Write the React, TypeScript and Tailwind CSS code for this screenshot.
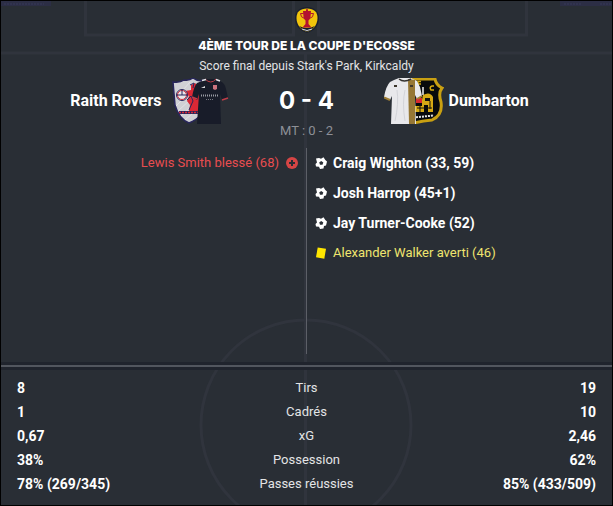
import React from 'react';
import clsx from 'clsx';

type EventKind = 'goal' | 'injury' | 'booking';

interface MatchEvent {
  kind: EventKind;
  text: string;
}

const homeEvents: MatchEvent[] = [
  { kind: 'injury', text: 'Lewis Smith blessé (68)' },
];

const awayEvents: MatchEvent[] = [
  { kind: 'goal', text: 'Craig Wighton (33, 59)' },
  { kind: 'goal', text: 'Josh Harrop (45+1)' },
  { kind: 'goal', text: 'Jay Turner-Cooke (52)' },
  { kind: 'booking', text: 'Alexander Walker averti (46)' },
];

const stats = [
  { label: 'Tirs', home: '8', away: '19' },
  { label: 'Cadrés', home: '1', away: '10' },
  { label: 'xG', home: '0,67', away: '2,46' },
  { label: 'Possession', home: '38%', away: '62%' },
  { label: 'Passes réussies', home: '78% (269/345)', away: '85% (433/509)' },
];

// Faint pitch markings behind the whole panel
const PitchBackground: React.FC = () => (
  <svg
    className="absolute inset-0 h-full w-full"
    viewBox="0 0 611 504"
    preserveAspectRatio="xMidYMin slice"
    aria-hidden="true"
  >
    <path d="M0 0h50v5H0zM559 0h52v5h-52z" fill="#2c2e45" />
    <path d="M3 3h40M563 3h17M599 3h12" stroke="#36385a" strokeWidth="1" strokeDasharray="2 1" />
    <g fill="none" stroke="#30343d" strokeWidth="3">
      <path d="M84.500 0v34h208V0M317.500 0v34h208V0" />
      <path d="M0 52h611" />
      <path d="M304.500 52v452" />
      <circle cx="305" cy="424" r="105" />
    </g>
  </svg>
);

const CupBadge: React.FC = () => (
  <svg width="26" height="28" viewBox="0 0 26 28" aria-hidden="true">
    <path d="M13 1C20 1 25 5 25 12C25 20 20 25 13 27C6 25 1 20 1 12C1 5 6 1 13 1Z" fill="#1b2030" />
    <path d="M13 2.500C20 2.500 23.500 6 23.500 12C23.500 19 19 24 13 26C7 24 2.500 19 2.500 12C2.500 6 6 2.500 13 2.500Z" fill="#f1c40c" />
    <path d="M5 20Q13 24 21 20Q18 24 13 26Q8 24 5 20Z" fill="#151b2b" />
    <path d="M8 23Q13 26 18 23" stroke="#d6d9df" fill="none" />
    <path d="M9 5h8l-.5 6q-.5 3-2 3.500v3.500l3 3.500H8.500l3-3.500v-3.500q-1.500-.5-2-3.500Z" fill="#b3122f" />
    <path d="M9.500 7.500H6.500q0 4 4 5M16.500 7.500H19.500q0 4-4 5M12.500 3.500h1v2h-1z" stroke="#b3122f" fill="none" />
  </svg>
);

const HomeKit: React.FC = () => (
  <svg width="58" height="46" viewBox="0 0 58 46" aria-hidden="true">
    <path d="M1 4Q8 5 12 2Q17 3 21 0Q26 4 32 2L34 24Q32 39 17 45Q7 41 3 27Z" fill="#d0d1d5" stroke="#28265c" strokeWidth="1.500" />
    <path d="M4 20L18 4M4 28L14 18M6 33L20 20M9 38L24 24M13 42L28 29" stroke="#e2e2e5" strokeWidth="1" />
    <path d="M19 7L23 5L27 9V33H17L18 27L15 23L17 18L13 16V13L19 12Z" fill="#db2835" />
    <path d="M18 7L22 5L21 10M15 22L19 18L21 23L17 32" stroke="#28265c" fill="none" />
    <circle cx="10" cy="17" r="5.500" fill="#e8e8eb" stroke="#28265c" />
    <circle cx="10" cy="17" r="4.500" fill="none" stroke="#d72a37" />
    <path d="M5 17h10M10 12v5" stroke="#28265c" />
    <path d="M7 34.500h20" stroke="#28265c" strokeWidth="3" />
    <path d="M7 34.500h20" stroke="#d72a37" strokeWidth="1.500" strokeDasharray="2 1" />
    <path d="M30 3L34 1H44L48 3Q53 5 54 11L56 20L50 22L48 16L49 46H25L27 16L25 22L20 19Q22 8 25 5Z" fill="#181c29" />
    <path d="M33 1Q39 7 44 1" stroke="#bd3d48" fill="none" />
    <path d="M30 2.500l4-1M44 1.500l4 1.500" stroke="#e4e4e7" strokeWidth="1.500" />
    <path d="M20 19l5 2M50 22l6-2" stroke="#bd3d48" strokeWidth="1.500" />
    <path d="M29 10l4-2v2z" fill="#d7d8dc" />
    <path d="M41 7h4v4l-2 1-2-1z" fill="#cc7580" />
    <path d="M29 17.500h17" stroke="#9a9ca5" strokeWidth="2" strokeDasharray="1 1" />
    <path d="M34 21.500h8" stroke="#777a84" strokeDasharray="1 1" />
  </svg>
);

const AwayKit: React.FC = () => (
  <svg width="60" height="46" viewBox="0 0 60 46" aria-hidden="true">
    <path d="M24 1L51 0Q52 6 59 10Q55 15 58 24Q60 38 48 43Q38 43 30 46L21 39Z" fill="#080a0c" />
    <path d="M24 1L51 1Q52 7 58 10Q54 15 57 24Q59 37 48 42Q38 43 30 45" stroke="#c9a012" strokeWidth="3" fill="none" />
    <path d="M34 8V3.500h3M34 6h3M50 8h-2q-3 1-1 4h3" fill="none" stroke="#d4aa12" strokeWidth="1.500" />
    <path d="M35 10v6M39 9v8" stroke="#f1f1f1" strokeWidth="1.500" />
    <path d="M30 34V28H38V22L39 17Q46 13 49 19V34H44V27H40V34Z" fill="#d6a914" />
    <path d="M41 20h5v3h-5z" fill="#131414" />
    <path d="M32 20h6v5h-6z" fill="#d92a2e" />
    <path d="M33 30h15M36 27v7M46 23v8" stroke="#15120a" />
    <path d="M29 39.500L50 37.500" stroke="#e6e6e6" strokeWidth="2" strokeDasharray="2 1" />
    <path d="M10 2L15 0H27L33 3L36 9L38 18L33 21L31 17L32 46H7L8 18L6 22L0 19Q2 8 6 4Z" fill="#e8e8eb" />
    <path d="M24 1L31 2L31 46H25Z" fill="#967735" />
    <path d="M15 1Q20 5 27 1" stroke="#34322f" fill="none" strokeWidth="1.500" />
    <path d="M0 19.500l6 2.500M33 21l5-3" stroke="#a18036" strokeWidth="2" />
    <path d="M10 8h3M26 8h3" stroke="#3b352b" strokeWidth="2" />
    <path d="M13 12Q15 25 11 43M21 12Q18 25 21 43" stroke="#d3d4d9" fill="none" />
  </svg>
);

const EventIcon: React.FC<{ kind: EventKind }> = ({ kind }) => {
  if (kind === 'injury') {
    return (
      <svg width="12" height="12" viewBox="0 0 12 12" aria-hidden="true">
        <circle cx="6" cy="6" r="6" fill="#d64545" />
        <path d="M6 3v6M3 6h6" stroke="#292e35" strokeWidth="2" />
      </svg>
    );
  }
  if (kind === 'booking') {
    return (
      <svg width="12" height="12" viewBox="0 0 12 12" aria-hidden="true">
        <path d="M2.700 .5L11 1.800L9.300 11.700L1 10.300Z" fill="#ffe600" />
      </svg>
    );
  }
  return (
    <svg width="12" height="12" viewBox="0 0 12 12" aria-hidden="true">
      <path d="M1 1.500L4 1L6 1.800L8.500 .3L10.300 3L12 4.500L11 8.500L9 9L8.500 11.500L5 11.900L4 9.800L1 9.500L.5 7L2 5.500Z" fill="#fff" />
      <path d="M6.200 3.900L8.300 5.400L7.500 7.800H5L4.200 5.400Z" fill="#292e35" />
    </svg>
  );
};

const EventList: React.FC<{ events: MatchEvent[]; side: 'home' | 'away' }> = ({ events, side }) => (
  <ul className={clsx('flex-1', side === 'home' ? 'pr-2' : 'pl-2')}>
    {events.map((event) => (
      <li
        key={event.text}
        className={clsx(
          'flex h-[30px] items-center whitespace-nowrap',
          side === 'home' ? 'flex-row-reverse gap-[7px]' : 'gap-[6px]',
          event.kind === 'goal' && 'text-[14px] font-bold text-white',
          event.kind === 'injury' && 'text-[13px] text-[#e84d50]',
          event.kind === 'booking' && 'text-[13px] text-[#efe56f]'
        )}
      >
        <EventIcon kind={event.kind} />
        <span>{event.text}</span>
      </li>
    ))}
  </ul>
);

const App: React.FC = () => {
  return (
    <main className="relative border border-black bg-[#292e35] font-['Roboto','Liberation_Sans',sans-serif] text-white">
      <PitchBackground />

      <div className="relative">
        <header className="flex flex-col items-center pt-[5px]">
          <CupBadge />
          <h1 className="mt-1 font-['Inter','Liberation_Sans',sans-serif] text-[12px] font-extrabold leading-4">
            4ÈME TOUR DE LA COUPE D'ECOSSE
          </h1>
          <p className="mt-[2px] text-[12px] leading-5 text-[#e3e4e6]">Score final depuis Stark's Park, Kirkcaldy</p>
        </header>

        <section className="mt-[2px] grid grid-cols-[1fr_154px_1fr] items-center">
          <div className="flex items-center justify-end gap-[10px]">
            <h2 className="text-[16px] font-bold">Raith Rovers</h2>
            <HomeKit />
          </div>
          <p className="text-center font-['Inter','Liberation_Sans',sans-serif] text-[24px] font-bold leading-8">0 - 4</p>
          <div className="flex items-center gap-[5px]">
            <AwayKit />
            <h2 className="text-[16px] font-bold">Dumbarton</h2>
          </div>
        </section>
        <p className="text-center text-[13px] leading-[14px] text-[#8d9097]">MT : 0 - 2</p>

        <section className="mt-[10px] flex min-h-[206px]">
          <EventList events={homeEvents} side="home" />
          <div className="w-px bg-[#5c5f67]" />
          <EventList events={awayEvents} side="away" />
        </section>

        <div className="mt-2 flex h-2 items-center bg-[#20242d]">
          <div className="h-[2px] w-full bg-[#52565e]" />
        </div>

        <section className="px-4 pt-[6px] pb-[9px]">
          <table className="w-full table-fixed text-[14px]">
            <tbody>
              {stats.map((row) => (
                <tr key={row.label} className="h-6">
                  <td className="p-0 text-left font-bold">{row.home}</td>
                  <th scope="row" className="p-0 text-center text-[13px] font-normal text-[#e3e4e6]">{row.label}</th>
                  <td className="p-0 text-right font-bold">{row.away}</td>
                </tr>
              ))}
            </tbody>
          </table>
        </section>
      </div>
    </main>
  );
};

export default App;
